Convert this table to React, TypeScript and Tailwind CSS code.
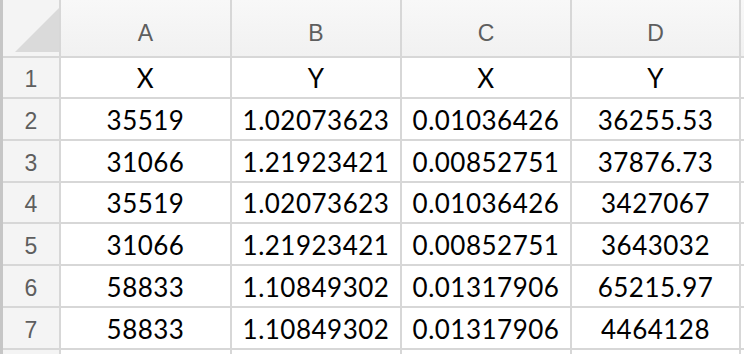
const cols = ["A", "B", "C", "D"];

const rows: string[][] = [
  ["X", "Y", "X", "Y"],
  ["35519", "1.02073623", "0.01036426", "36255.53"],
  ["31066", "1.21923421", "0.00852751", "37876.73"],
  ["35519", "1.02073623", "0.01036426", "3427067"],
  ["31066", "1.21923421", "0.00852751", "3643032"],
  ["58833", "1.10849302", "0.01317906", "65215.97"],
  ["58833", "1.10849302", "0.01317906", "4464128"],
  ["", "", "", ""],
];

const rowHeights = ["h-[41px]", "h-[42px]", "h-[42px]", "h-[41px]", "h-[42px]", "h-[42px]", "h-[42px]", "h-[42px]"];

function HeaderCell({ label }: { label: string }) {
  return (
    <div className="flex items-end justify-center border-r-2 border-b-2 border-[#d7d7d7] bg-gradient-to-b from-[#f8f8f8] to-[#f1f1f1] pb-[11px] font-['Liberation_Sans',sans-serif] text-[23px] leading-none text-[#5e5e5e]">
      {label}
    </div>
  );
}

export default function App() {
  return (
    <div className="flex h-[354px] w-[744px] overflow-hidden bg-white font-['Lato',sans-serif]">
      <div className="w-[3px] shrink-0 bg-[#c6c6c6]" />
      <div className="grid shrink-0 grid-cols-[58px_171px_170px_170px_169px_40px] content-start">
        {/* column headings */}
        <div className="relative h-[58px] border-r-2 border-b-2 border-[#d7d7d7] bg-[#f4f4f4]">
          <div className="absolute top-[8px] left-[12px] h-[44px] w-[44px] bg-[#dadada] [clip-path:polygon(100%_0,100%_100%,0_100%)]" />
        </div>
        {cols.map((c) => (
          <HeaderCell key={c} label={c} />
        ))}
        <div className="border-b-2 border-[#d7d7d7] bg-gradient-to-b from-[#f8f8f8] to-[#f1f1f1]" />

        {rows.map((r, i) => (
          <div key={i} className="contents">
            <div
              className={`${rowHeights[i]} flex items-center justify-center border-r-2 border-b-2 border-[#d7d7d7] bg-[#f4f4f4] pt-[4px] font-['Liberation_Sans',sans-serif] text-[23px] leading-none text-[#5e5e5e]`}
            >
              {i < 7 ? i + 1 : ""}
            </div>
            {r.map((v, j) => (
              <div
                key={j}
                className="flex items-end justify-center border-r-2 border-b-2 border-[#d7d7d7] pb-[6px] text-[26px] leading-none tracking-[0.5px] text-black"
              >
                {v}
              </div>
            ))}
            <div className="border-b-2 border-[#d7d7d7]" />
          </div>
        ))}
      </div>
    </div>
  );
}
